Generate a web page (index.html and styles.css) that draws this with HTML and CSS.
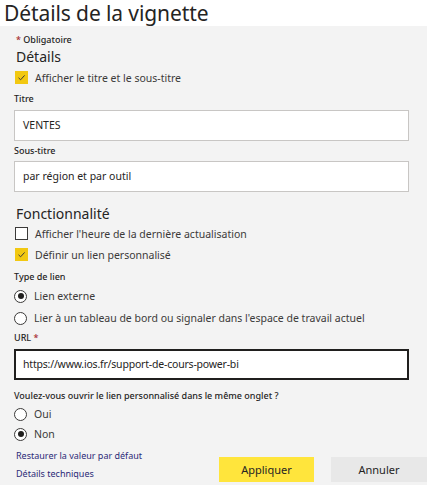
FILE: index.html
```html
<!DOCTYPE html>
<html lang="fr">
<head>
<meta charset="utf-8">
<title>Détails de la vignette</title>
<link rel="stylesheet" href="styles.css">
</head>
<body>
<header class="header"><h1 class="title">Détails de la vignette</h1></header>
<main class="panel">
  <div class="required"><span class="star">*</span> Obligatoire</div>
  <h2 class="section first">Détails</h2>
  <div class="row row-first">
    <span class="cb checked"><svg viewBox="0 0 13 13" width="13" height="13"><path d="M3.5 6.8 L5.6 8.8 L9.6 4.4" fill="none" stroke="#3b3a39" stroke-width="1"/></svg></span>
    <span class="row-text">Afficher le titre et le sous-titre</span>
  </div>
  <div class="label l-titre">Titre</div>
  <div class="input">VENTES</div>
  <div class="label l-sous">Sous-titre</div>
  <div class="input">par région et par outil</div>

  <h2 class="section second">Fonctionnalité</h2>
  <div class="row">
    <span class="cb"></span>
    <span class="row-text">Afficher l'heure de la dernière actualisation</span>
  </div>
  <div class="row">
    <span class="cb checked"><svg viewBox="0 0 13 13" width="13" height="13"><path d="M3.5 6.8 L5.6 8.8 L9.6 4.4" fill="none" stroke="#3b3a39" stroke-width="1"/></svg></span>
    <span class="row-text">Définir un lien personnalisé</span>
  </div>
  <div class="label l-type">Type de lien</div>
  <div class="radio-row r22"><span class="radio on"></span><span class="row-text">Lien externe</span></div>
  <div class="radio-row r22"><span class="radio"></span><span class="row-text">Lier à un tableau de bord ou signaler dans l'espace de travail actuel</span></div>
  <div class="label l-url">URL <span class="star">*</span></div>
  <div class="input focused">https://www.ios.fr/support-de-cours-power-bi</div>
  <div class="label l-q">Voulez-vous ouvrir le lien personnalisé dans le même onglet ?</div>
  <div class="radio-row r20"><span class="radio"></span><span class="row-text">Oui</span></div>
  <div class="radio-row r20"><span class="radio on"></span><span class="row-text">Non</span></div>

  <footer class="footer">
    <div class="links">
      <a class="link">Restaurer la valeur par défaut</a>
      <a class="link">Détails techniques</a>
    </div>
    <div class="buttons">
      <button class="btn primary">Appliquer</button>
      <button class="btn secondary">Annuler</button>
    </div>
  </footer>
</main>
</body>
</html>
```
FILE: styles.css
```css
* { box-sizing: border-box; }
html, body { margin: 0; padding: 0; }
body {
  background: #f3f3f3;
  font-family: "Noto Sans", "Open Sans", sans-serif;
  color: #252423;
  width: 427px;
  height: 485px;
  overflow: hidden;
}
.header {
  background: #ffffff;
  height: 26px;
  padding-left: 4px;
}
.title {
  margin: 0;
  font-weight: 400;
  font-size: 21px;
  line-height: 26px;
  color: #252423;
  letter-spacing: -0.1px;
}
.panel {
  padding: 6px 0 0 14px;
}
.required {
  font-size: 9px;
  font-weight: 500;
  line-height: 16px;
  padding-left: 2px;
}
.star { color: #a4262c; }
.section {
  margin: 0;
  font-weight: 400;
  font-size: 14px;
  line-height: 18px;
  padding-left: 2px;
}
.section.second { margin-top: 13px; }
.row {
  display: flex;
  align-items: center;
  height: 21px;
  padding-left: 1px;
}
.row.row-first { height: 23px; }
.cb {
  width: 13px;
  height: 13px;
  border: 1px solid #3b3a39;
  background: #fff;
  flex: none;
  display: flex;
}
.cb.checked {
  background: #f2c811;
  border-color: #f2c811;
}
.cb svg { margin: -1px; }
.row-text {
  font-size: 10.5px;
  line-height: 16px;
  margin-left: 7px;
  color: #3b3a39;
  white-space: nowrap;
}
.label {
  font-size: 9px;
  font-weight: 500;
  line-height: 16px;
}
.l-titre { margin: 2px 0 3px; }
.l-sous { margin: 2px 0 2px; }
.l-type { margin-top: 4px; }
.l-url { margin: 1px 0 3px; }
.l-q { margin-top: 8px; }
.input {
  width: 395px;
  height: 31px;
  background: #fff;
  border: 1px solid #c8c6c4;
  font-size: 10.5px;
  line-height: 29px;
  padding-left: 8px;
  color: #252423;
}
.input.focused {
  border: 2px solid #201f1e;
  line-height: 27px;
  padding-left: 7px;
  letter-spacing: -0.2px;
}
.radio-row {
  display: flex;
  align-items: center;
}
.r22 { height: 22px; }
.r20 { height: 20px; }
.radio {
  width: 13px;
  height: 13px;
  border: 1px solid #3b3a39;
  border-radius: 50%;
  background: #fff;
  flex: none;
  display: flex;
  align-items: center;
  justify-content: center;
}
.radio.on::after {
  content: "";
  width: 6px;
  height: 6px;
  border-radius: 50%;
  background: #201f1e;
}
.radio-row .row-text { margin-left: 7px; }
.footer {
  display: flex;
  justify-content: space-between;
  padding-top: 3px;
}
.links {
  display: flex;
  flex-direction: column;
  padding-left: 2px;
}
.link {
  font-size: 9px;
  line-height: 18px;
  color: #2b2a78;
}
.buttons {
  display: flex;
  gap: 17px;
  margin-top: 10px;
  height: 25px;
}
.btn {
  border: none;
  height: 25px;
  font-family: inherit;
  font-size: 11px;
  color: #252423;
  padding: 0;
}
.btn.primary { width: 95px; background: #ffe53c; }
.btn.secondary { width: 96px; background: #e8e8e8; }
```
